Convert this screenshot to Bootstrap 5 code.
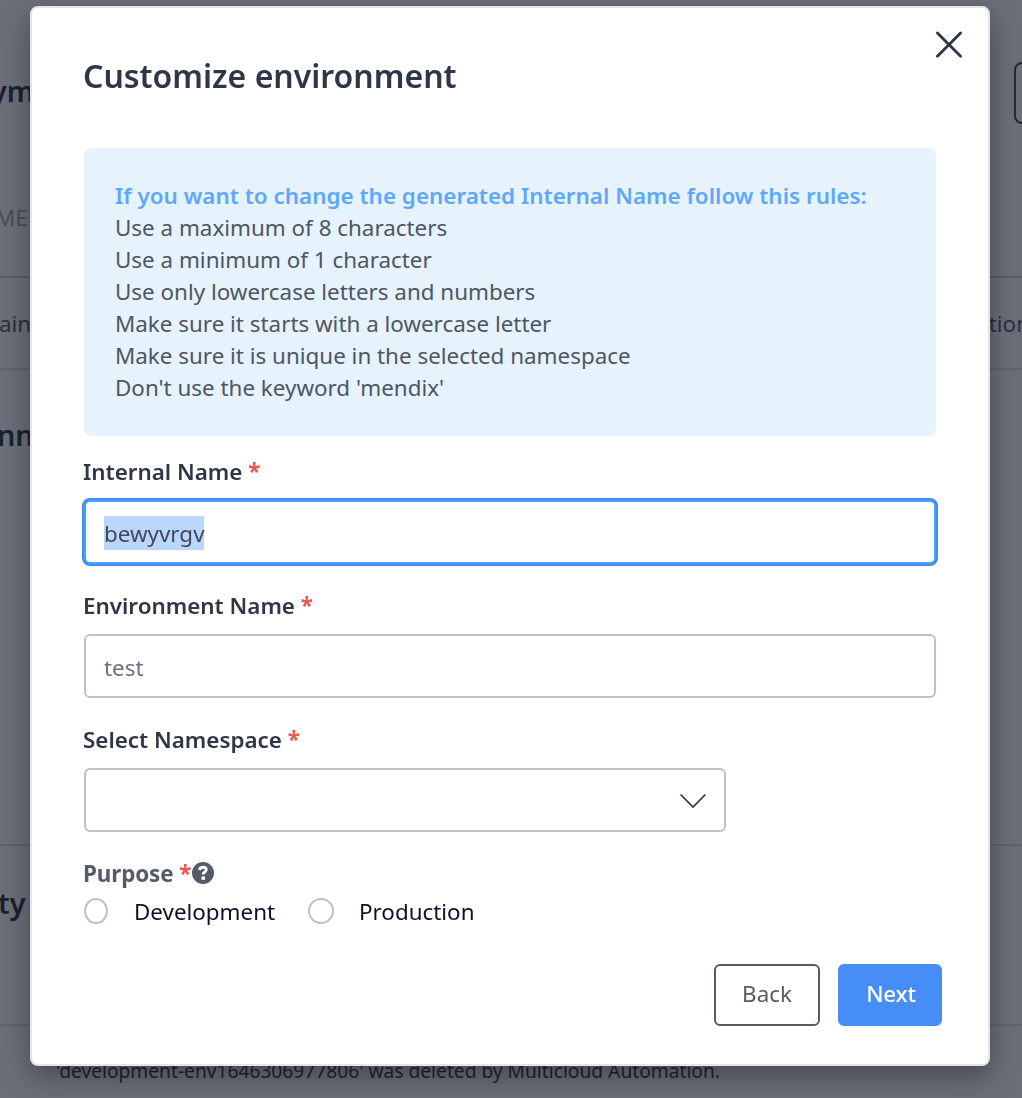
<!DOCTYPE html>
<html lang="en">
<head>
<meta charset="utf-8">
<meta name="viewport" content="width=device-width, initial-scale=1">
<title>Customize environment</title>
<link rel="stylesheet" href="https://cdn.jsdelivr.net/npm/bootstrap@5.3.0/dist/css/bootstrap.min.css">
<style>
  body { font-family: "Noto Sans", sans-serif; font-size: 22.4px; line-height: 32px; color: #2f3646; background: #6b6f79; height: 1098px; overflow: hidden; }
  .page-line { border-bottom: 2px solid #60636d; }
  .page-title { font-size: 28.8px; font-weight: 600; color: #1b2130; line-height: 40px; margin-left: -3px; }
  .page-head { height: 278px; padding-top: 62px; border-bottom-color: #5b5e69; }
  .page-head .tab-text { color: #484c58; margin: 78px 0 0 -5px; line-height: 32px; }
  .page-head .page-title { margin-left: -9px; padding-top: 9px; }
  .head-btn { width: 120px; height: 62px; margin-right: -112px; border: 2px solid #262b3a; border-radius: 8px; flex: none; }
  .page-row { height: 92px; color: #2b303e; padding-top: 2px; }
  .page-row .row-start { margin-left: -1px; }
  .page-row .row-end { margin-right: -8px; }
  .page-apps { height: 476px; padding-top: 45px; }
  .page-activity { height: 180px; padding-top: 37px; }
  .page-activity .page-title { margin-left: -2px; }
  .page-log { padding: 29px 0 0 56px; font-size: 19.2px; color: #20242e; }

  .modal { --bs-modal-padding: 0; overflow: hidden; }
  .modal-dialog { margin: 6px 0 0 30px; width: 960px; max-width: none; }
  .modal-content { height: 1060px; border: 2px solid #e5e4e8; border-radius: 8px; background-clip: border-box; box-shadow: 0 10px 30px rgba(0,0,0,.36); color: #2f3646; padding: 0 52px; }
  .modal-header { height: 140px; padding: 45px 0 0; }
  .modal-title { font-size: 32px; line-height: 46px; font-weight: 600; margin-left: -1px; }
  .close-btn { margin: -23px -28px 0 0; line-height: 0; background: none; border: 0; padding: 0; }
  .rules { height: 288px; background: #e6f2fc; border: 0; border-radius: 6px; padding: 32px 31px 30px; color: #4d5664; }
  .rules strong { color: #5ea8fb; font-weight: 600; letter-spacing: .02px; }
  .field-label { display: block; font-weight: 600; line-height: 32px; margin: 26px 0 12px -1px; }
  .first-label { margin-top: 20px; }
  .field-label .req { color: #ea5851; font-weight: 700; }
  .form-control { height: 64px; border: 2px solid #c1c0c8; border-radius: 6px; padding: 2px 18px 0; font-size: 22.4px; line-height: 34px; color: #6c7080; background: #fff; }
  .active-input { border-color: #4ba1f8; box-shadow: 0 0 0 2px #448cf3; display: flex; align-items: center; color: #40495a; }
  .active-input span { background: #bbd6fc; height: 34px; line-height: 35px; width: 100px; }
  .ns-select { width: 642px; display: flex; align-items: center; justify-content: flex-end; }
  .purpose { color: #565b68; }
  .purpose > span { font-weight: 700; letter-spacing: -.1px; }
  .help-icon { margin: -2px 0 0 1px; }
  .choices { height: 32px; margin-top: 6px; color: #0a1229; }
  .ring { width: 24px; height: 26px; margin-top: -2px; border: 2px solid #c1c0c8; border-radius: 50%; flex: none; }
  .ring-two { width: 26px; }
  .dev { margin-left: 26px; width: 174px; }
  .prod { margin-left: 25px; }
  .btn { height: 62px; font-size: 22.4px; border-radius: 6px; border-width: 2px; padding: 0 0 2px; }
  .btn-back { width: 106px; color: #565b68; border-color: #565b68; background: #fff; }
  .btn-next { width: 104px; color: #fff; background: #468ef5; border-color: #468ef5; font-weight: 500; padding-left: 2px; letter-spacing: -.2px; }
  .modal-footer { border: 0; padding: 0; margin: 36px -6px 0 0; gap: 18px; }
  .modal-footer > * { margin: 0; }
</style>
<script src="https://cdn.jsdelivr.net/npm/bootstrap@5.3.0/dist/js/bootstrap.bundle.min.js"></script>
</head>
<body>
<main>
  <header class="page-head page-line">
    <div class="d-flex justify-content-between">
      <div class="page-title">ym</div>
      <div class="head-btn"></div>
    </div>
    <div class="tab-text">MEN</div>
  </header>
  <section class="page-row page-line d-flex align-items-center justify-content-between">
    <span class="row-start">ain</span><span class="row-end">tion</span>
  </section>
  <section class="page-apps page-line"><div class="page-title">nn</div></section>
  <section class="page-activity page-line"><div class="page-title">ty</div></section>
  <footer class="page-log">'development-env1646306977806' was deleted by Multicloud Automation.</footer>
</main>

<div class="modal d-block" tabindex="-1">
  <div class="modal-dialog">
    <div class="modal-content">
      <div class="modal-header border-0 d-flex align-items-start justify-content-between">
        <h1 class="modal-title">Customize environment</h1>
        <button class="close-btn" type="button" aria-label="Close">
          <svg width="30" height="30" viewBox="0 0 30 30" fill="none" stroke="#2f3646" stroke-width="2.8" stroke-linecap="round"><path d="M3.4 3 26.6 26.2M26.6 3 3.4 26.2"/></svg>
        </button>
      </div>
      <div class="alert rules mb-0">
        <strong>If you want to change the generated Internal Name follow this rules:</strong>
        <div>Use a maximum of 8 characters</div>
        <div>Use a minimum of 1 character</div>
        <div>Use only lowercase letters and numbers</div>
        <div>Make sure it starts with a lowercase letter</div>
        <div>Make sure it is unique in the selected namespace</div>
        <div>Don't use the keyword 'mendix'</div>
      </div>
      <div><div class="field-label first-label"><span>Internal Name <b class="req">*</b></span></div>
        <div class="form-control active-input"><span>bewyvrgv</span></div></div>
      <div><div class="field-label"><span>Environment Name <b class="req">*</b></span></div>
        <input class="form-control" type="text" value="test" aria-label="Environment Name"></div>
      <div><div class="field-label"><span>Select Namespace <b class="req">*</b></span></div>
        <div class="form-control ns-select">
          <svg width="26" height="16" viewBox="0 0 26 16" fill="none" stroke="#2f3646" stroke-width="1.7"><path d="M.6 1.5 13 14 25.4 1.5"/></svg>
        </div></div>
      <div class="field-label purpose d-flex align-items-center mb-0"><span>Purpose <b class="req">*</b></span>
        <svg class="help-icon" width="22" height="22" viewBox="0 0 22 22"><circle cx="11" cy="11" r="11" fill="#565b68"/><path d="M7.2 7.9Q8.4 5.3 11.1 5.3Q14.2 5.3 14.2 7.8Q14.2 9.3 12.5 10.2Q11.1 11 11.1 12.5" fill="none" stroke="#fff" stroke-width="2.9"/><path d="M9.5 14.4h3.5v3.4H9.5z" fill="#fff"/></svg>
      </div>
      <div class="choices d-flex align-items-center" role="radiogroup">
        <span class="ring"></span><span class="dev">Development</span>
        <span class="ring ring-two"></span><span class="prod">Production</span>
      </div>
      <div class="modal-footer d-flex flex-nowrap">
        <button class="btn btn-back" type="button">Back</button>
        <button class="btn btn-next" type="button">Next</button>
      </div>
    </div>
  </div>
</div>
</body>
</html>
